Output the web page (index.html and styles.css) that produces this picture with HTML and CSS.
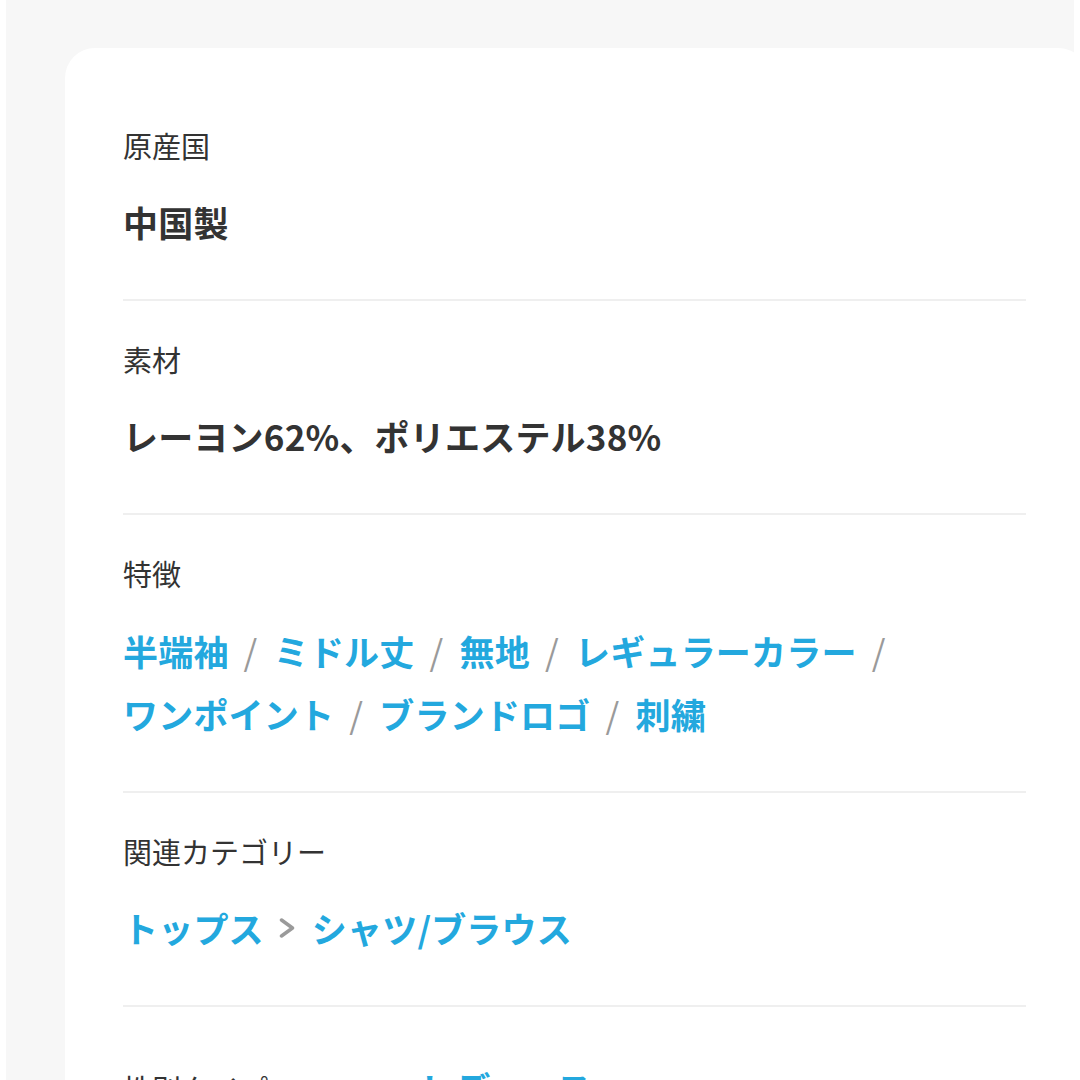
FILE: index.html
```html
<!DOCTYPE html>
<html lang="ja">
<head>
<meta charset="utf-8">
<title>商品詳細</title>
<link rel="stylesheet" href="styles.css">
</head>
<body>
<div class="page">
  <div class="card">
    <section class="section">
      <div class="label">原産国</div>
      <div class="value">中国製</div>
    </section>
    <section class="section">
      <div class="label">素材</div>
      <div class="value">レーヨン62%、ポリエステル38%</div>
    </section>
    <section class="section">
      <div class="label">特徴</div>
      <div class="value tags"><span class="tag-item"><a class="link" href="#">半端袖</a><span class="sep">/</span></span> <span class="tag-item"><a class="link" href="#">ミドル丈</a><span class="sep">/</span></span> <span class="tag-item"><a class="link" href="#">無地</a><span class="sep">/</span></span> <span class="tag-item"><a class="link" href="#">レギュラーカラー</a><span class="sep">/</span></span> <span class="tag-item"><a class="link" href="#">ワンポイント</a><span class="sep">/</span></span> <span class="tag-item"><a class="link" href="#">ブランドロゴ</a><span class="sep">/</span></span> <span class="tag-item"><a class="link" href="#">刺繍</a></span></div>
    </section>
    <section class="section">
      <div class="label">関連カテゴリー</div>
      <div class="value crumbs"><a class="link" href="#">トップス</a><svg class="chev" width="16" height="20" viewBox="0 0 16 20"><path d="M2.5 2 L13.5 10 L2.5 18" fill="none" stroke="#9a9a9a" stroke-width="3.5" stroke-linecap="round" stroke-linejoin="round"/></svg><a class="link" href="#">シャツ/ブラウス</a></div>
    </section>
    <section class="section section-row">
      <div class="label label-fixed">性別タイプ</div>
      <div class="value"><a class="link" href="#">レディース</a></div>
    </section>
  </div>
</div>
</body>
</html>
```

FILE: styles.css
```css
html, body {
  margin: 0;
  padding: 0;
  background: #ffffff;
}
body {
  font-family: "Noto Sans CJK JP", "Noto Sans", sans-serif;
  color: #333333;
  overflow: hidden;
  height: 1080px;
}
.page {
  margin: 0 6px;
  background: #f7f7f7;
  height: 1080px;
  overflow: hidden;
  padding-top: 48px;
  box-sizing: border-box;
}
.card {
  background: #ffffff;
  margin-left: 59px;
  margin-right: -14px;
  border-radius: 30px;
  padding: 39px 62px 0 58px;
  min-height: 1200px;
}
.section {
  padding: 36px 0 46px;
  border-bottom: 2px solid #efefef;
}
.label {
  font-size: 29px;
  line-height: 44px;
  color: #333333;
  font-weight: 400;
}
.value {
  margin-top: 24px;
  font-size: 35px;
  line-height: 62px;
  font-weight: 700;
  color: #333333;
  letter-spacing: 0.2px;
}
.link {
  color: #23a8de;
  text-decoration: none;
  font-weight: 700;
}
.tag-item {
  white-space: nowrap;
}
.sep {
  color: #9a9a9a;
  font-weight: 400;
  margin: 0 8px 0 15px;
}
.tags {
  line-height: 63px;
}
.crumbs {
  display: flex;
  align-items: center;
}
.chev {
  margin: 0 17px 0 15px;
  flex: none;
}
.section-row {
  display: flex;
  align-items: center;
  padding-top: 50px;
  border-bottom: none;
}
.section-row .value {
  margin-top: 0;
}
.label-fixed {
  width: 297px;
  flex: none;
}
```
